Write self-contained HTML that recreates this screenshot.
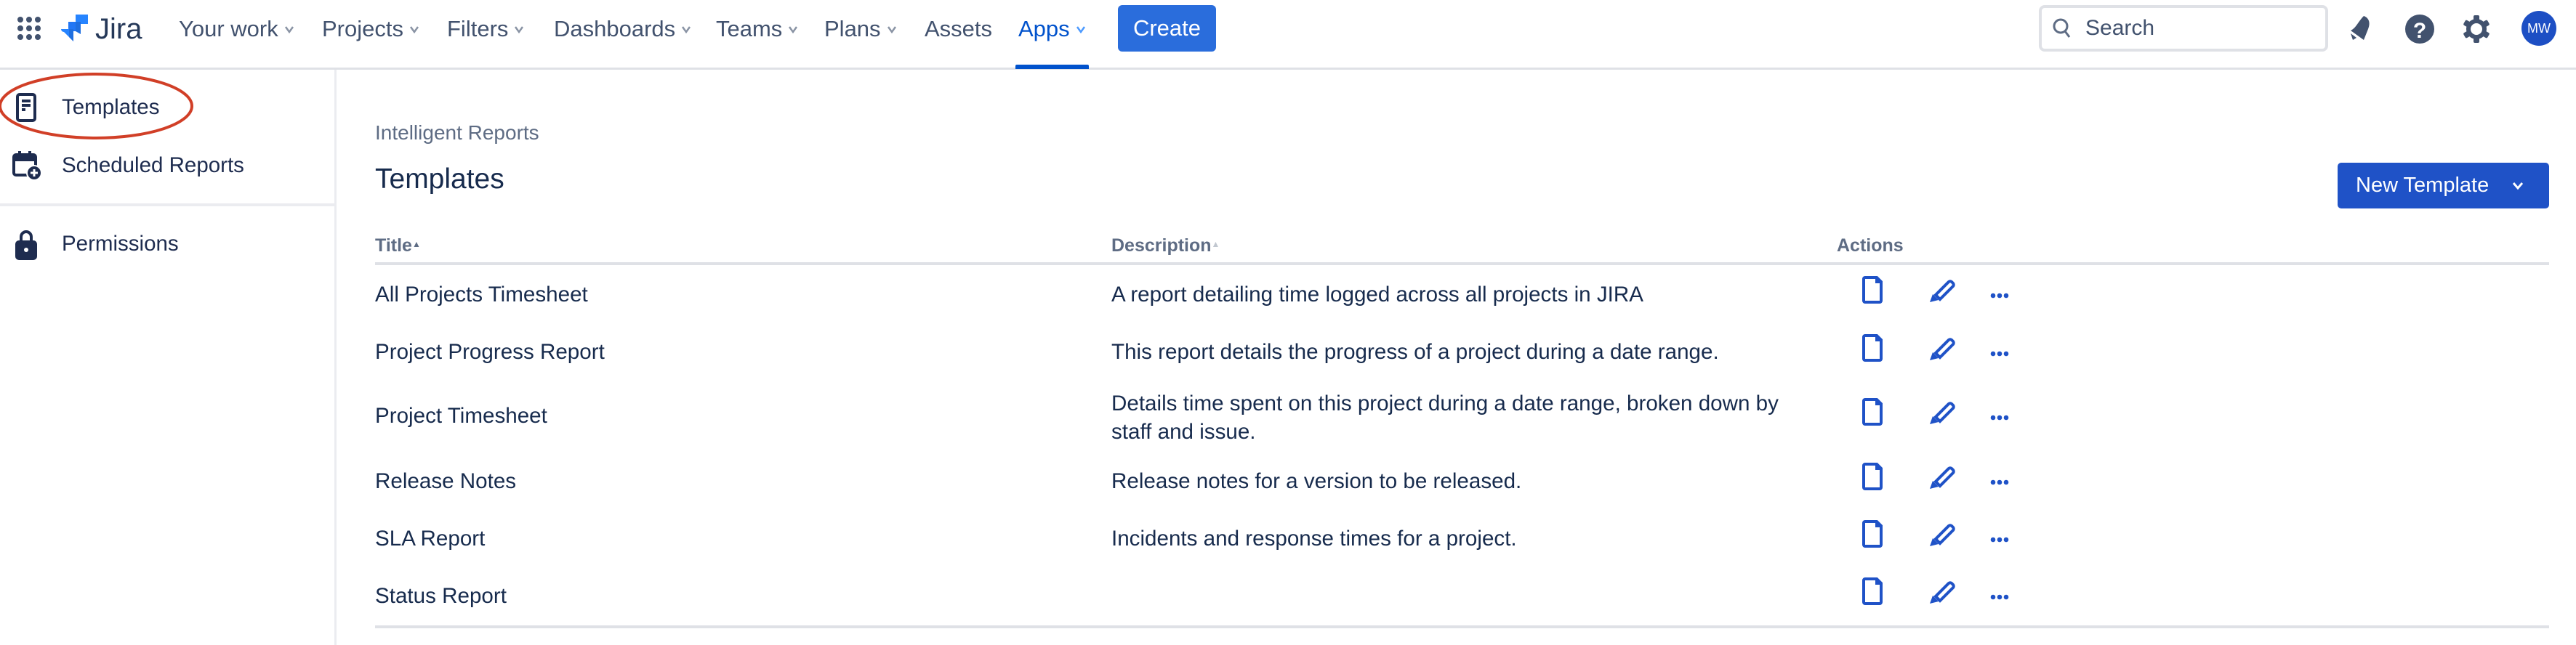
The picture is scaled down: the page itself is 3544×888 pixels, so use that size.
<!DOCTYPE html>
<html><head><meta charset="utf-8"><style>
*{margin:0;padding:0;box-sizing:border-box}
body{width:3544px;height:888px;overflow:hidden;background:#fff;font-family:"Liberation Sans",Arial,sans-serif;color:#172b4d;position:relative}
.a{position:absolute;white-space:nowrap}
.nav{font-size:31px;color:#42526e;top:22px}
.nav svg{margin-left:8px;vertical-align:4px}
.t{font-size:29.6px;color:#172b4d}
.s{font-size:29.5px;color:#1e2c4f}
.h{font-size:25px;font-weight:bold;color:#5e6c84;top:324px}
</style></head><body>
<svg width="0" height="0" style="position:absolute"><defs>
<path id="chev" d="M2 2l5 7 5-7" fill="none" stroke="#8993a4" stroke-width="2.5"/>
<g id="acts">
<path d="M5 2h16l6 6v26a2 2 0 0 1-2 2H5a2 2 0 0 1-2-2V4a2 2 0 0 1 2-2z" fill="none" stroke="#1f52c7" stroke-width="4"/>
<path d="M19 2l8 8h-8z" fill="#1f52c7"/>
<g transform="translate(94,2)"><path d="M8 24L26 6a3 3 0 0 1 4 0l2 2a3 3 0 0 1 0 4L14 30z" fill="none" stroke="#1f52c7" stroke-width="4"/><path d="M0 34l4-11 8 8z" fill="#1f52c7"/></g>
<g fill="#1f52c7"><circle cx="181" cy="27" r="3.3"/><circle cx="190" cy="27" r="3.3"/><circle cx="199" cy="27" r="3.3"/></g>
</g></defs></svg>
<!-- header -->
<div class="a" style="left:0;top:93px;width:3544px;height:3px;background:#dfe1e6"></div>
<svg class="a" style="left:24px;top:23px" width="32" height="32" viewBox="0 0 32 32" fill="#42526e">
<circle cx="4" cy="4" r="4"/><circle cx="16" cy="4" r="4"/><circle cx="28" cy="4" r="4"/>
<circle cx="4" cy="16" r="4"/><circle cx="16" cy="16" r="4"/><circle cx="28" cy="16" r="4"/>
<circle cx="4" cy="28" r="4"/><circle cx="16" cy="28" r="4"/><circle cx="28" cy="28" r="4"/></svg>
<svg class="a" style="left:84px;top:20px" width="38" height="38" viewBox="0 0 38 38">
<path d="M20 0h17v13L24 13a4 4 0 0 1-4-4z" fill="#2684ff"/>
<path d="M10 10h17v13H14a4 4 0 0 1-4-4z" fill="#2277f5"/>
<path d="M0 20h17v17L4 24a4 4 0 0 1-4-4z" fill="#2684ff"/>
<path d="M27 10v17l-7-4V10z" fill="#1f6fe0"/><path d="M17 20v17l-6-6V20z" fill="#1f6fe0"/>
</svg>
<div class="a" style="left:131px;top:18px;font-size:40px;color:#253858">Jira</div>
<div class="a nav" style="left:246px">Your work<svg width="14" height="11"><use href="#chev"/></svg></div>
<div class="a nav" style="left:443px">Projects<svg width="14" height="11"><use href="#chev"/></svg></div>
<div class="a nav" style="left:615px">Filters<svg width="14" height="11"><use href="#chev"/></svg></div>
<div class="a nav" style="left:762px">Dashboards<svg width="14" height="11"><use href="#chev"/></svg></div>
<div class="a nav" style="left:985px">Teams<svg width="14" height="11"><use href="#chev"/></svg></div>
<div class="a nav" style="left:1134px">Plans<svg width="14" height="11"><use href="#chev"/></svg></div>
<div class="a nav" style="left:1272px">Assets</div>
<div class="a nav" style="left:1401px;color:#0052cc">Apps<svg width="14" height="11"><path d="M2 2l5 7 5-7" fill="none" stroke="#4c9aff" stroke-width="2.5"/></svg></div>
<div class="a" style="left:1397px;top:89px;width:101px;height:6px;background:#0052cc;border-radius:2px 2px 0 0"></div>
<div class="a" style="left:1538px;top:7px;width:135px;height:64px;background:#2a6ddc;border-radius:6px;color:#fff;font-size:31px;text-align:center;line-height:64px">Create</div>
<div class="a" style="left:2805px;top:7px;width:398px;height:64px;border:4px solid #dfe1e6;border-radius:8px"></div>
<svg class="a" style="left:2824px;top:24px" width="26" height="30" viewBox="0 0 26 30" fill="none" stroke="#5e6c84" stroke-width="3"><circle cx="11" cy="12" r="9"/><path d="M17 19l6 8"/></svg>
<div class="a" style="left:2869px;top:22px;font-size:30px;color:#42526e">Search</div>
<svg class="a" style="left:3230px;top:22px" width="36" height="34" viewBox="0 0 36 34" fill="#42526e"><path d="M22 0c6 2 10 8 6 18l-6 15L4 20c8-4 10-12 18-20z"/><path d="M4 24l8 6-5 3z"/></svg>
<svg class="a" style="left:3308px;top:19px" width="42" height="42"><circle cx="21" cy="21" r="20" fill="#42526e"/><text x="21" y="33" text-anchor="middle" font-family="Liberation Sans" font-weight="bold" font-size="30" fill="#fff">?</text></svg>
<svg class="a" style="left:3387px;top:20px" width="40" height="40" viewBox="0 0 40 40"><g fill="#42526e"><rect x="16" y="1" width="8" height="38" rx="2"/><rect x="16" y="1" width="8" height="38" rx="2" transform="rotate(60 20 20)"/><rect x="16" y="1" width="8" height="38" rx="2" transform="rotate(120 20 20)"/><circle cx="20" cy="20" r="14"/></g><circle cx="20" cy="20" r="8" fill="#fff"/></svg>
<div class="a" style="left:3469px;top:15px;width:48px;height:48px;border-radius:50%;background:#1d4fc4;color:#fff;font-size:18px;text-align:center;line-height:48px">MW</div>
<!-- sidebar -->
<div class="a" style="left:460px;top:96px;width:3px;height:792px;background:#ebecf0"></div>
<div class="a" style="left:0;top:280px;width:460px;height:4px;background:#ebecf0"></div>
<svg class="a" style="left:-2px;top:99px" width="272" height="94"><ellipse cx="134" cy="47" rx="132" ry="44" fill="none" stroke="#d13f27" stroke-width="4"/></svg>
<svg class="a" style="left:22px;top:128px" width="28" height="40" viewBox="0 0 28 40" fill="none" stroke="#1e2c4f" stroke-width="4"><rect x="2" y="2" width="24" height="36" rx="3"/><path d="M8 11h12M8 17h12M8 23h5"/></svg>
<div class="a s" style="left:85px;top:131px">Templates</div>
<svg class="a" style="left:17px;top:208px" width="40" height="40" viewBox="0 0 40 40"><rect x="2" y="5" width="30" height="28" rx="3" fill="none" stroke="#1e2c4f" stroke-width="4"/><rect x="2" y="5" width="30" height="9" fill="#1e2c4f"/><rect x="8" y="0" width="4" height="8" fill="#1e2c4f"/><rect x="22" y="0" width="4" height="8" fill="#1e2c4f"/><circle cx="30" cy="30" r="10" fill="#1e2c4f" stroke="#fff" stroke-width="2"/><path d="M30 25v10M25 30h10" stroke="#fff" stroke-width="3"/></svg>
<div class="a s" style="left:85px;top:211px">Scheduled Reports</div>
<svg class="a" style="left:20px;top:316px" width="32" height="42" viewBox="0 0 32 42" fill="none" stroke="#1e2c4f" stroke-width="4"><path d="M9 18V10a7 7 0 0 1 14 0v8"/><rect x="3" y="17" width="26" height="23" rx="3" fill="#1e2c4f"/><circle cx="16" cy="28" r="3" fill="#fff" stroke="none"/></svg>
<div class="a s" style="left:85px;top:319px">Permissions</div>
<!-- main -->
<div class="a" style="left:516px;top:167px;font-size:28px;color:#5e6c84">Intelligent Reports</div>
<div class="a" style="left:516px;top:225px;font-size:39px;color:#172b4d">Templates</div>
<div class="a" style="left:3216px;top:224px;width:291px;height:63px;background:#1f52c7;border-radius:5px;color:#fff;font-size:29px;line-height:63px;padding-left:25px">New Template <svg width="16" height="12" style="margin-left:24px;vertical-align:2px"><path d="M2 2l6 7 6-7" fill="none" stroke="#fff" stroke-width="3"/></svg></div>
<div class="a h" style="left:516px">Title<span style="font-size:12px;color:#5e6c84;vertical-align:6px">▲</span></div>
<div class="a h" style="left:1529px">Description<span style="font-size:12px;color:#c1c7d0;vertical-align:6px">▲</span></div>
<div class="a h" style="left:2527px">Actions</div>
<div class="a" style="left:516px;top:361px;width:2991px;height:4px;background:#dfe1e6"></div>
<div class="a" style="left:516px;top:861px;width:2991px;height:4px;background:#dfe1e6"></div>

<div class="a t" style="left:516px;top:389px">All Projects Timesheet</div>
<div class="a t" style="left:1529px;top:389px">A report detailing time logged across all projects in JIRA</div>
<div class="a t" style="left:516px;top:468px">Project Progress Report</div>
<div class="a t" style="left:1529px;top:468px">This report details the progress of a project during a date range.</div>
<div class="a t" style="left:516px;top:556px">Project Timesheet</div>
<div class="a t" style="left:1529px;top:536px;line-height:39px">Details time spent on this project during a date range, broken down by<br>staff and issue.</div>
<div class="a t" style="left:516px;top:646px">Release Notes</div>
<div class="a t" style="left:1529px;top:646px">Release notes for a version to be released.</div>
<div class="a t" style="left:516px;top:725px">SLA Report</div>
<div class="a t" style="left:1529px;top:725px">Incidents and response times for a project.</div>
<div class="a t" style="left:516px;top:804px">Status Report</div>

<svg class="a" style="left:2561px;top:380px" width="210" height="40"><use href="#acts"/></svg>
<svg class="a" style="left:2561px;top:460px" width="210" height="40"><use href="#acts"/></svg>
<svg class="a" style="left:2561px;top:548px" width="210" height="40"><use href="#acts"/></svg>
<svg class="a" style="left:2561px;top:637px" width="210" height="40"><use href="#acts"/></svg>
<svg class="a" style="left:2561px;top:716px" width="210" height="40"><use href="#acts"/></svg>
<svg class="a" style="left:2561px;top:795px" width="210" height="40"><use href="#acts"/></svg>
</body></html>
